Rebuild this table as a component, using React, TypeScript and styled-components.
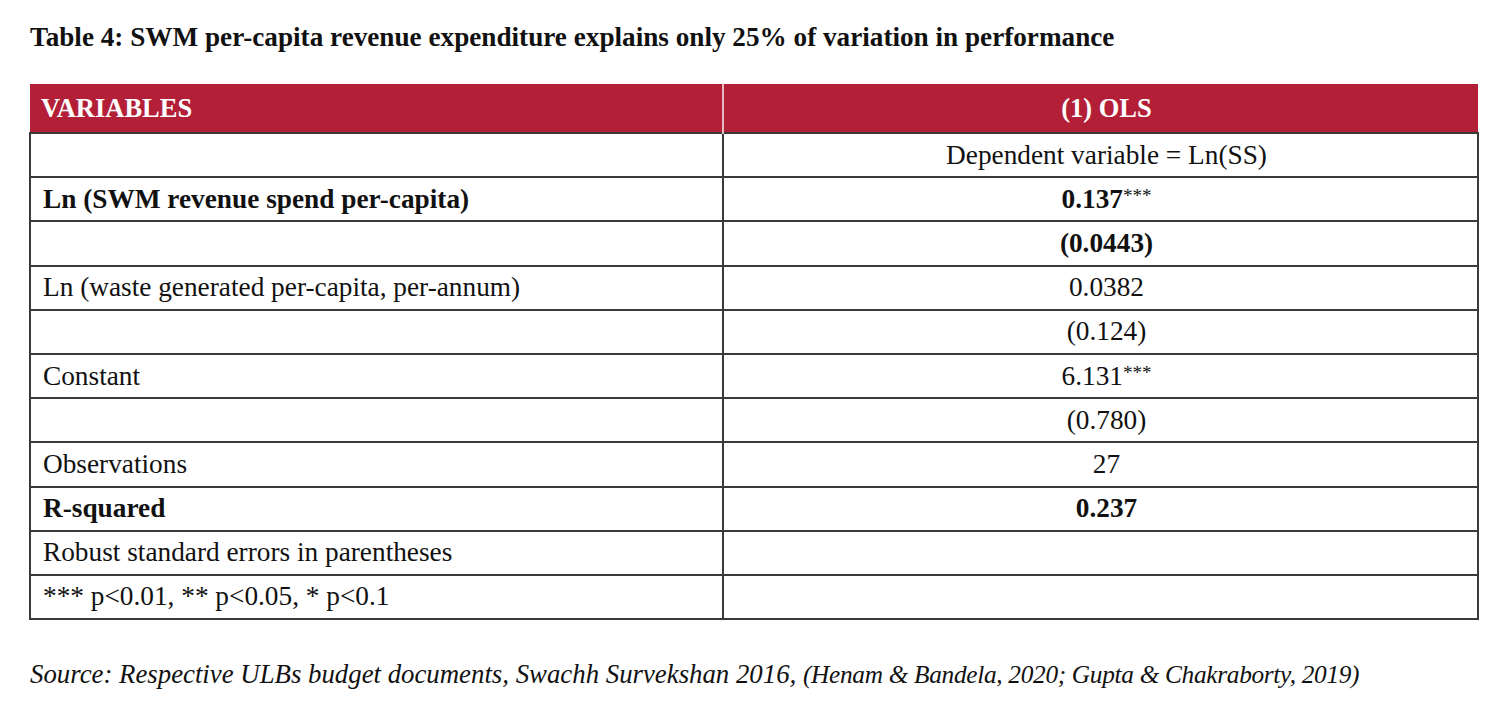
import React from "react";
import styled, { createGlobalStyle } from "styled-components";

const Global = createGlobalStyle`
  html, body { margin: 0; padding: 0; background: #fff; }
  body { font-family: "Liberation Serif", "Times New Roman", serif; color: #111; }
`;

const Page = styled.div`
  width: 1500px;
  height: 716px;
  box-sizing: border-box;
  padding: 19px 23px 0 29px;
  display: flex;
  flex-direction: column;
`;

const Title = styled.h1`
  margin: 0 0 28px 1px;
  font-size: 27.2px;
  line-height: 37px;
  font-weight: 700;
  color: #111;
`;

const Table = styled.table`
  width: 1448px;
  border-collapse: collapse;
  table-layout: fixed;
`;

const HeadCell = styled.th<{ $align?: string }>`
  background: #b41f38;
  color: #fff;
  height: 48px;
  padding: 0 0 0 11px;
  font-size: 26.5px;
  font-weight: 700;
  text-align: ${(p) => p.$align || "left"};
  border-left: 2px solid #e9b9c1;
  &:first-child { border-left: none; }
`;

const Cell = styled.td<{ $bold?: boolean; $center?: boolean }>`
  height: 42.2px;
  padding: 0 0 0 12px;
  border: 2px solid #3a3a3a;
  font-size: 27.3px;
  font-weight: ${(p) => (p.$bold ? 700 : 400)};
  text-align: ${(p) => (p.$center ? "center" : "left")};
  color: #111;
  white-space: nowrap;
`;

const Stars = styled.span`
  font-weight: 400;
  font-size: 19px;
  vertical-align: 6px;
`;

const Source = styled.p`
  margin: 39px 0 0 1px;
  font-size: 26.8px;
  font-style: italic;
  color: #111;
`;

const Cite = styled.span`
  font-size: 25.3px;
  letter-spacing: -0.3px;
`;

type Row = { label: string; value: React.ReactNode; bold?: boolean };

const rows: Row[] = [
  { label: "", value: "Dependent variable = Ln(SS)" },
  { label: "Ln (SWM revenue spend per-capita)", value: <>0.137<Stars>***</Stars></>, bold: true },
  { label: "", value: "(0.0443)", bold: true },
  { label: "Ln (waste generated per-capita, per-annum)", value: "0.0382" },
  { label: "", value: "(0.124)" },
  { label: "Constant", value: <>6.131<Stars>***</Stars></> },
  { label: "", value: "(0.780)" },
  { label: "Observations", value: "27" },
  { label: "R-squared", value: "0.237", bold: true },
  { label: "Robust standard errors in parentheses", value: "" },
  { label: "*** p<0.01, ** p<0.05, * p<0.1", value: "" },
];

export default function App() {
  return (
    <Page>
      <Global />
      <Title>Table 4: SWM per-capita revenue expenditure explains only 25% of variation in performance</Title>
      <Table>
        <colgroup>
          <col style={{ width: 693 }} />
          <col style={{ width: 755 }} />
        </colgroup>
        <thead>
          <tr>
            <HeadCell>VARIABLES</HeadCell>
            <HeadCell $align="center">(1) OLS</HeadCell>
          </tr>
        </thead>
        <tbody>
          {rows.map((r, i) => (
            <tr key={i}>
              <Cell $bold={r.bold}>{r.label}</Cell>
              <Cell $bold={r.bold} $center>{r.value}</Cell>
            </tr>
          ))}
        </tbody>
      </Table>
      <Source>
        Source: Respective ULBs budget documents, Swachh Survekshan 2016, <Cite>(Henam &amp; Bandela, 2020; Gupta &amp; Chakraborty, 2019)</Cite>
      </Source>
    </Page>
  );
}
